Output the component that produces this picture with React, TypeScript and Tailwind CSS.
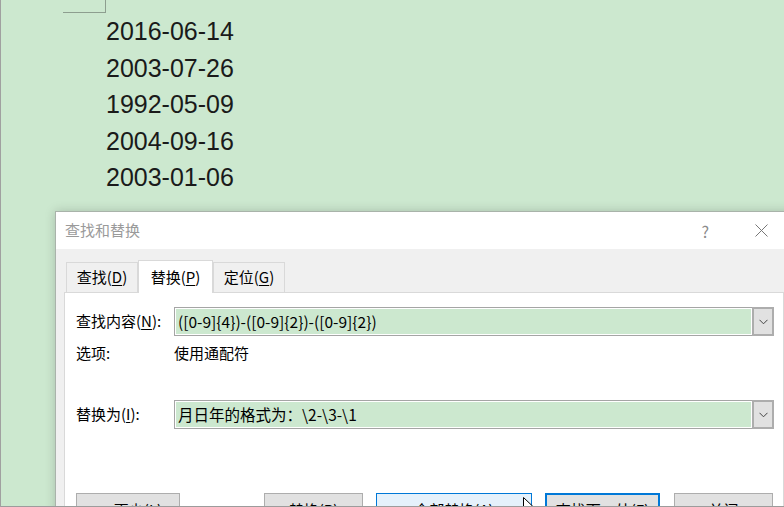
import React from "react";

const cjk = "font-['Microsoft_YaHei','Noto_Sans_CJK_SC',sans-serif]";

const DATES = ["2016-06-14", "2003-07-26", "1992-05-09", "2004-09-16", "2003-01-06"];

function Key({ k }: { k: string }) {
  return <span className="underline underline-offset-2">{k}</span>;
}

function Combo({ value }: { value: string }) {
  return (
    <div className="flex h-[29px] w-[600px]">
      <div className="flex flex-1 border border-r-0 border-[#a5a5a5] bg-white p-px">
        <div className="flex flex-1 items-center bg-[#cce8cf] pl-[2px] text-[15.5px] text-black">
          {value}
        </div>
      </div>
      <div className="flex w-[22px] items-center justify-center border-2 border-[#adadad] bg-[#e1e1e1]">
        <svg width="9" height="6" viewBox="0 0 9 6">
          <path d="M0.5 0.8 L4.5 4.8 L8.5 0.8" fill="none" stroke="#444" strokeWidth="1" />
        </svg>
      </div>
    </div>
  );
}

function Button({
  label,
  w,
  kind = "normal",
}: {
  label: React.ReactNode;
  w: string;
  kind?: "normal" | "hover" | "default";
}) {
  const look =
    kind === "hover"
      ? "border border-[#0078d7] bg-[#e5f1fb]"
      : kind === "default"
        ? "border-2 border-[#0078d7] bg-[#e1e1e1]"
        : "border border-[#adadad] bg-[#e1e1e1]";
  return (
    <div className={`flex h-[34px] shrink-0 items-center justify-center text-[15px] text-black ${w} ${look}`}>
      {label}
    </div>
  );
}

export default function App() {
  return (
    <div className={`relative h-[507px] w-[784px] overflow-hidden border-l border-[#a0a0a0] bg-[#cce8cf] ${cjk}`}>
      {/* page corner mark */}
      <div className="ml-[62px] h-[13px] w-[43px] border-b border-r border-[#8d9e8f]" />

      <div className="ml-[105px] font-['Liberation_Sans',Arial,sans-serif] text-[25px] leading-[36.5px] text-[#1a1a1a]">
        {DATES.map((d) => (
          <div key={d}>{d}</div>
        ))}
      </div>

      {/* dialog */}
      <div className="absolute left-[54px] top-[211px] w-[745px] border border-[#a9b3aa] bg-[#f0f0f0] shadow-[0_0_10px_rgba(0,0,0,0.18)]">
        <div className="flex h-[37px] items-center bg-white pl-[9px] text-[15px] text-[#9a9a9a]">
          <span className="flex-1">查找和替换</span>
          <span className="mr-[46px] text-[16px] text-[#8a8a8a]">?</span>
          <svg width="13" height="13" viewBox="0 0 13 13" className="mr-[31px]">
            <path d="M0.5 0.5 L12.5 12.5 M12.5 0.5 L0.5 12.5" stroke="#777" strokeWidth="1" />
          </svg>
        </div>

        <div className="flex items-end pl-[10px] pt-[11px] text-[15px] text-black">
          <div className="flex h-[30px] w-[72px] items-center justify-center border border-b-0 border-[#d9d9d9]">
            查找(<Key k="D" />)
          </div>
          <div className="relative z-10 -mb-px flex h-[33px] w-[75px] items-center justify-center border border-b-0 border-[#d9d9d9] bg-white">
            替换(<Key k="P" />)
          </div>
          <div className="flex h-[30px] w-[72px] items-center justify-center border border-b-0 border-[#d9d9d9]">
            定位(<Key k="G" />)
          </div>
        </div>

        <div className="ml-[8px] h-[260px] w-[720px] border border-[#d9d9d9] bg-white pl-[11px] pt-[14px] text-[15px] text-black">
          <div className="flex items-center">
            <div className="w-[98px]">
              查找内容(<Key k="N" />):
            </div>
            <Combo value="([0-9]{4})-([0-9]{2})-([0-9]{2})" />
          </div>

          <div className="mt-[7px] flex h-[20px] items-center">
            <div className="w-[98px]">选项:</div>
            <div>使用通配符</div>
          </div>

          <div className="mt-[37px] flex items-center">
            <div className="w-[98px]">
              替换为(<Key k="I" />):
            </div>
            <Combo value="月日年的格式为：\2-\3-\1" />
          </div>

          <div className="mt-[64px] flex">
            <Button w="w-[104px]" label={<>&lt;&lt; 更少(<Key k="L" />)</>} />
            <div className="ml-[84px]">
              <Button w="w-[99px]" label={<>替换(<Key k="R" />)</>} />
            </div>
            <div className="ml-[13px]">
              <Button w="w-[156px]" kind="hover" label={<>全部替换(<Key k="A" />)</>} />
            </div>
            <div className="ml-[13px]">
              <Button w="w-[115px]" kind="default" label={<>查找下一处(<Key k="F" />)</>} />
            </div>
            <div className="ml-[14px]">
              <Button w="w-[99px]" label="关闭" />
            </div>
          </div>
        </div>
      </div>

      {/* mouse pointer */}
      <svg width="12" height="18" viewBox="0 0 12 18" className="absolute left-[522px] top-[497px]">
        <path d="M0.5 0.5 L0.5 15 L4 11.5 L6.5 17 L8.5 16 L6 10.5 L11 10.5 Z" fill="#fff" stroke="#000" strokeWidth="1" />
      </svg>

      <div className="absolute bottom-0 left-0 right-0 h-px bg-[#9c9c9c]" />
    </div>
  );
}
